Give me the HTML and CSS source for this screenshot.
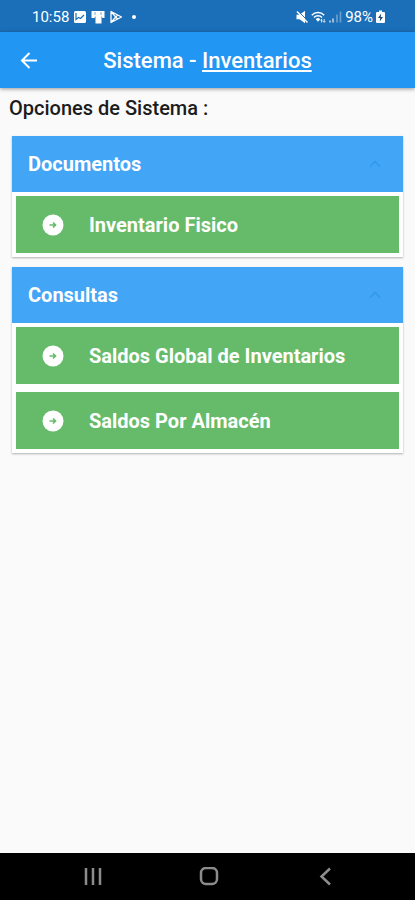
FILE: index.html
```
<!DOCTYPE html>
<html lang="es">
<head>
  <meta charset="UTF-8" />
  <meta name="viewport" content="width=device-width, initial-scale=1.0"/>
  <title>Sistema - Inventarios</title>
  <link rel="stylesheet" href="styles.css">
</head>
<body>
  <div class="status-bar">
    <div class="status-group">
      <span class="clock">10:58</span>
      <svg width="14" height="14" viewBox="0 0 14 14">
        <rect x="1" y="1" width="12" height="12" rx="1.5" fill="#fff"/>
        <path d="M3 3v6.5l2.500-2 2 1 3.500-3.500" fill="none" stroke="#1b6fb8" stroke-width="1.200"/>
      </svg>
      <svg width="14" height="14" viewBox="0 0 14 14">
        <path d="M0.500 1h13v7h-2l-1-2v7.500h-6v-7.500l-1 2h-3z" fill="#fff"/>
        <path d="M4 2v3M10 2v3" stroke="#1b6fb8" stroke-width="0.600"/>
      </svg>
      <svg width="14" height="14" viewBox="0 0 14 14">
        <path d="M2 1.500v11l10.500-5.500zM2 1.500l6.500 7.500M2 12.500l6.500-7.500" fill="none" stroke="#fff" stroke-width="1.300" stroke-linejoin="round"/>
      </svg>
      <span class="dot"></span>
    </div>
    <div class="status-group right">
      <svg width="12" height="14" viewBox="0 0 12 14">
        <path d="M0.500 4.800h3l5.500-4v12.400l-5.500-4h-3z" fill="#fff"/>
        <path d="M2.500 1.500l9 9" stroke="#1b6fb8" stroke-width="1"/>
        <path d="M1 1.500l10.500 11" stroke="#fff" stroke-width="1.500"/>
      </svg>
      <svg width="15" height="14" viewBox="0 0 15 14">
        <path d="M0.800 5.200a8.600 8.600 0 0 1 12.400 0M3 7.500a5.600 5.600 0 0 1 8 0" fill="none" stroke="#fff" stroke-width="1.500"/>
        <path d="M4.800 9.200a3 3 0 0 1 4.400 0l-2.200 2.500z" fill="#fff"/>
        <path d="M10.500 12.500v-3M9.300 10.500l1.200-1.200 1.200 1.200M13.200 9v3.200M12 11.200l1.200 1.200 1.200-1.200" fill="none" stroke="#fff" stroke-width="0.800"/>
      </svg>
      <svg width="13" height="14" viewBox="0 0 13 14">
        <path d="M1 12.500v-2M4 12.500v-4" stroke="#fff" stroke-opacity="0.700" stroke-width="1.600"/>
        <path d="M8 12.500v-8M11.500 12.500v-11" stroke="#fff" stroke-opacity="0.350" stroke-width="1.600"/>
      </svg>
      <span class="battery">98%</span>
      <svg width="9" height="14" viewBox="0 0 9 14">
        <path d="M3 0.500h3v1.500h2q1 0 1 1v9q0 1-1 1h-7q-1 0-1-1v-9q0-1 1-1h2z" fill="#fff"/>
        <path d="M5.200 3.500l-3.200 4.500h2.200l-0.500 3.500 3.300-4.500h-2.300z" fill="#17456e"/>
      </svg>
    </div>
  </div>

  <header class="app-bar">
    <a class="back" href="#" aria-label="Volver">
      <svg width="24" height="24" viewBox="0 0 24 24">
        <path d="M20 12.500H5.500M12.500 5l-7.500 7.500 7.500 7.500" fill="none" stroke="#fff" stroke-width="2"/>
      </svg>
    </a>
    <h1>Sistema - <u>Inventarios</u></h1>
  </header>

  <main>
    <h2 class="label">Opciones de Sistema :</h2>

    <section class="card">
      <button class="card-header" aria-expanded="true" aria-controls="documentos">
        <span>Documentos</span>
        <svg class="chevron" width="24" height="24" viewBox="0 0 24 24">
          <path d="M7 14.500l5-5 5 5" fill="none" stroke="#2f98ee" stroke-width="1.500"/>
        </svg>
      </button>
      <div class="options" id="documentos">
        <button class="option">
          <svg width="22" height="22" viewBox="0 0 22 22">
            <circle cx="11" cy="11" r="10.500" fill="#fff"/>
            <path d="M7.500 11h6M11 8.500l2.500 2.500-2.500 2.500" fill="none" stroke="#66bb6a" stroke-width="1.700"/>
          </svg>
          <span>Inventario Fisico</span>
        </button>
      </div>
    </section>

    <section class="card">
      <button class="card-header" aria-expanded="true" aria-controls="consultas">
        <span>Consultas</span>
        <svg class="chevron" width="24" height="24" viewBox="0 0 24 24">
          <path d="M7 14.500l5-5 5 5" fill="none" stroke="#2f98ee" stroke-width="1.500"/>
        </svg>
      </button>
      <div class="options" id="consultas">
        <button class="option">
          <svg width="22" height="22" viewBox="0 0 22 22">
            <circle cx="11" cy="11" r="10.500" fill="#fff"/>
            <path d="M7.500 11h6M11 8.500l2.500 2.500-2.500 2.500" fill="none" stroke="#66bb6a" stroke-width="1.700"/>
          </svg>
          <span>Saldos Global de Inventarios</span>
        </button>
        <button class="option">
          <svg width="22" height="22" viewBox="0 0 22 22">
            <circle cx="11" cy="11" r="10.500" fill="#fff"/>
            <path d="M7.500 11h6M11 8.500l2.500 2.500-2.500 2.500" fill="none" stroke="#66bb6a" stroke-width="1.700"/>
          </svg>
          <span>Saldos Por Almacén</span>
        </button>
      </div>
    </section>
  </main>

  <nav class="nav-bar">
    <button aria-label="Recientes">
      <svg width="20" height="20" viewBox="0 0 20 20">
        <path d="M3 1v17M10 1v17M17 1v17" stroke="#8c8c8c" stroke-width="2.500"/>
      </svg>
    </button>
    <button aria-label="Inicio">
      <svg width="20" height="20" viewBox="0 0 20 20">
        <rect x="2" y="1" width="16" height="16" rx="5" fill="none" stroke="#8c8c8c" stroke-width="2.500"/>
      </svg>
    </button>
    <button aria-label="Atrás">
      <svg width="20" height="20" viewBox="0 0 20 20">
        <path d="M14 1.500l-8.500 8 8.500 8" fill="none" stroke="#8c8c8c" stroke-width="2.500"/>
      </svg>
    </button>
  </nav>

  <script>
    // Open and close each group
    document.querySelectorAll(".card-header").forEach(function (header) {
      header.addEventListener("click", function () {
        const open = header.getAttribute("aria-expanded") === "true";
        header.setAttribute("aria-expanded", String(!open));
        document.getElementById(header.getAttribute("aria-controls")).hidden = open;
      });
    });
  </script>
</body>
</html>
```
FILE: styles.css
```
* {
  box-sizing: border-box;
}

body {
  font-family: Roboto, sans-serif;
  background: #fafafa;
  color: #1c1c1c;
  margin: 0;
  min-height: 100vh;
  display: flex;
  flex-direction: column;
}

svg {
  display: block;
  flex: none;
}

button {
  font-family: inherit;
  border: none;
  cursor: pointer;
}

.status-bar {
  display: flex;
  align-items: center;
  justify-content: space-between;
  height: 32px;
  padding: 2px 30px 0 32px;
  background: #1b6fb8;
  color: white;
  font-size: 15px;
}

.status-group {
  display: flex;
  align-items: center;
  gap: 4px;
}

.dot {
  width: 4px;
  height: 4px;
  margin-left: 5px;
  border-radius: 50%;
  background: white;
}

.right {
  gap: 3px;
}

.app-bar {
  display: grid;
  grid-template-columns: 24px 1fr 24px;
  align-items: center;
  height: 56px;
  padding: 0 17px;
  background: #2196f3;
  color: white;
  box-shadow: 0 1px 4px rgba(0, 0, 0, 0.4);
}

.app-bar h1 {
  margin: 0;
  font-size: 22px;
  font-weight: 500;
  text-align: center;
}

main {
  flex: 1;
}

.label {
  margin: 8px 9px 16px;
  font-size: 20px;
  font-weight: 500;
  line-height: 24px;
}

.card {
  margin: 0 12px 10px;
  background: white;
  box-shadow: 0 1px 2px rgba(0, 0, 0, 0.3);
}

.card-header {
  display: flex;
  align-items: center;
  justify-content: space-between;
  width: 100%;
  height: 56px;
  padding: 0 16px;
  background: #42a5f5;
  color: white;
  font-size: 20px;
  font-weight: 700;
}

.card-header[aria-expanded="false"] .chevron {
  transform: rotate(180deg);
}

.options {
  display: grid;
  gap: 8px;
  padding: 4px;
}

.options[hidden] {
  display: none;
}

.option {
  display: flex;
  align-items: center;
  gap: 25px;
  height: 57px;
  padding: 0 26px;
  background: #66bb6a;
  color: white;
  font-size: 20px;
  font-weight: 700;
  text-align: left;
}

.nav-bar {
  display: grid;
  grid-template-columns: repeat(3, 1fr);
  height: 47px;
  padding: 0 31px 0 35px;
  background: black;
}

.nav-bar button {
  display: flex;
  align-items: center;
  justify-content: center;
  background: none;
}
```
